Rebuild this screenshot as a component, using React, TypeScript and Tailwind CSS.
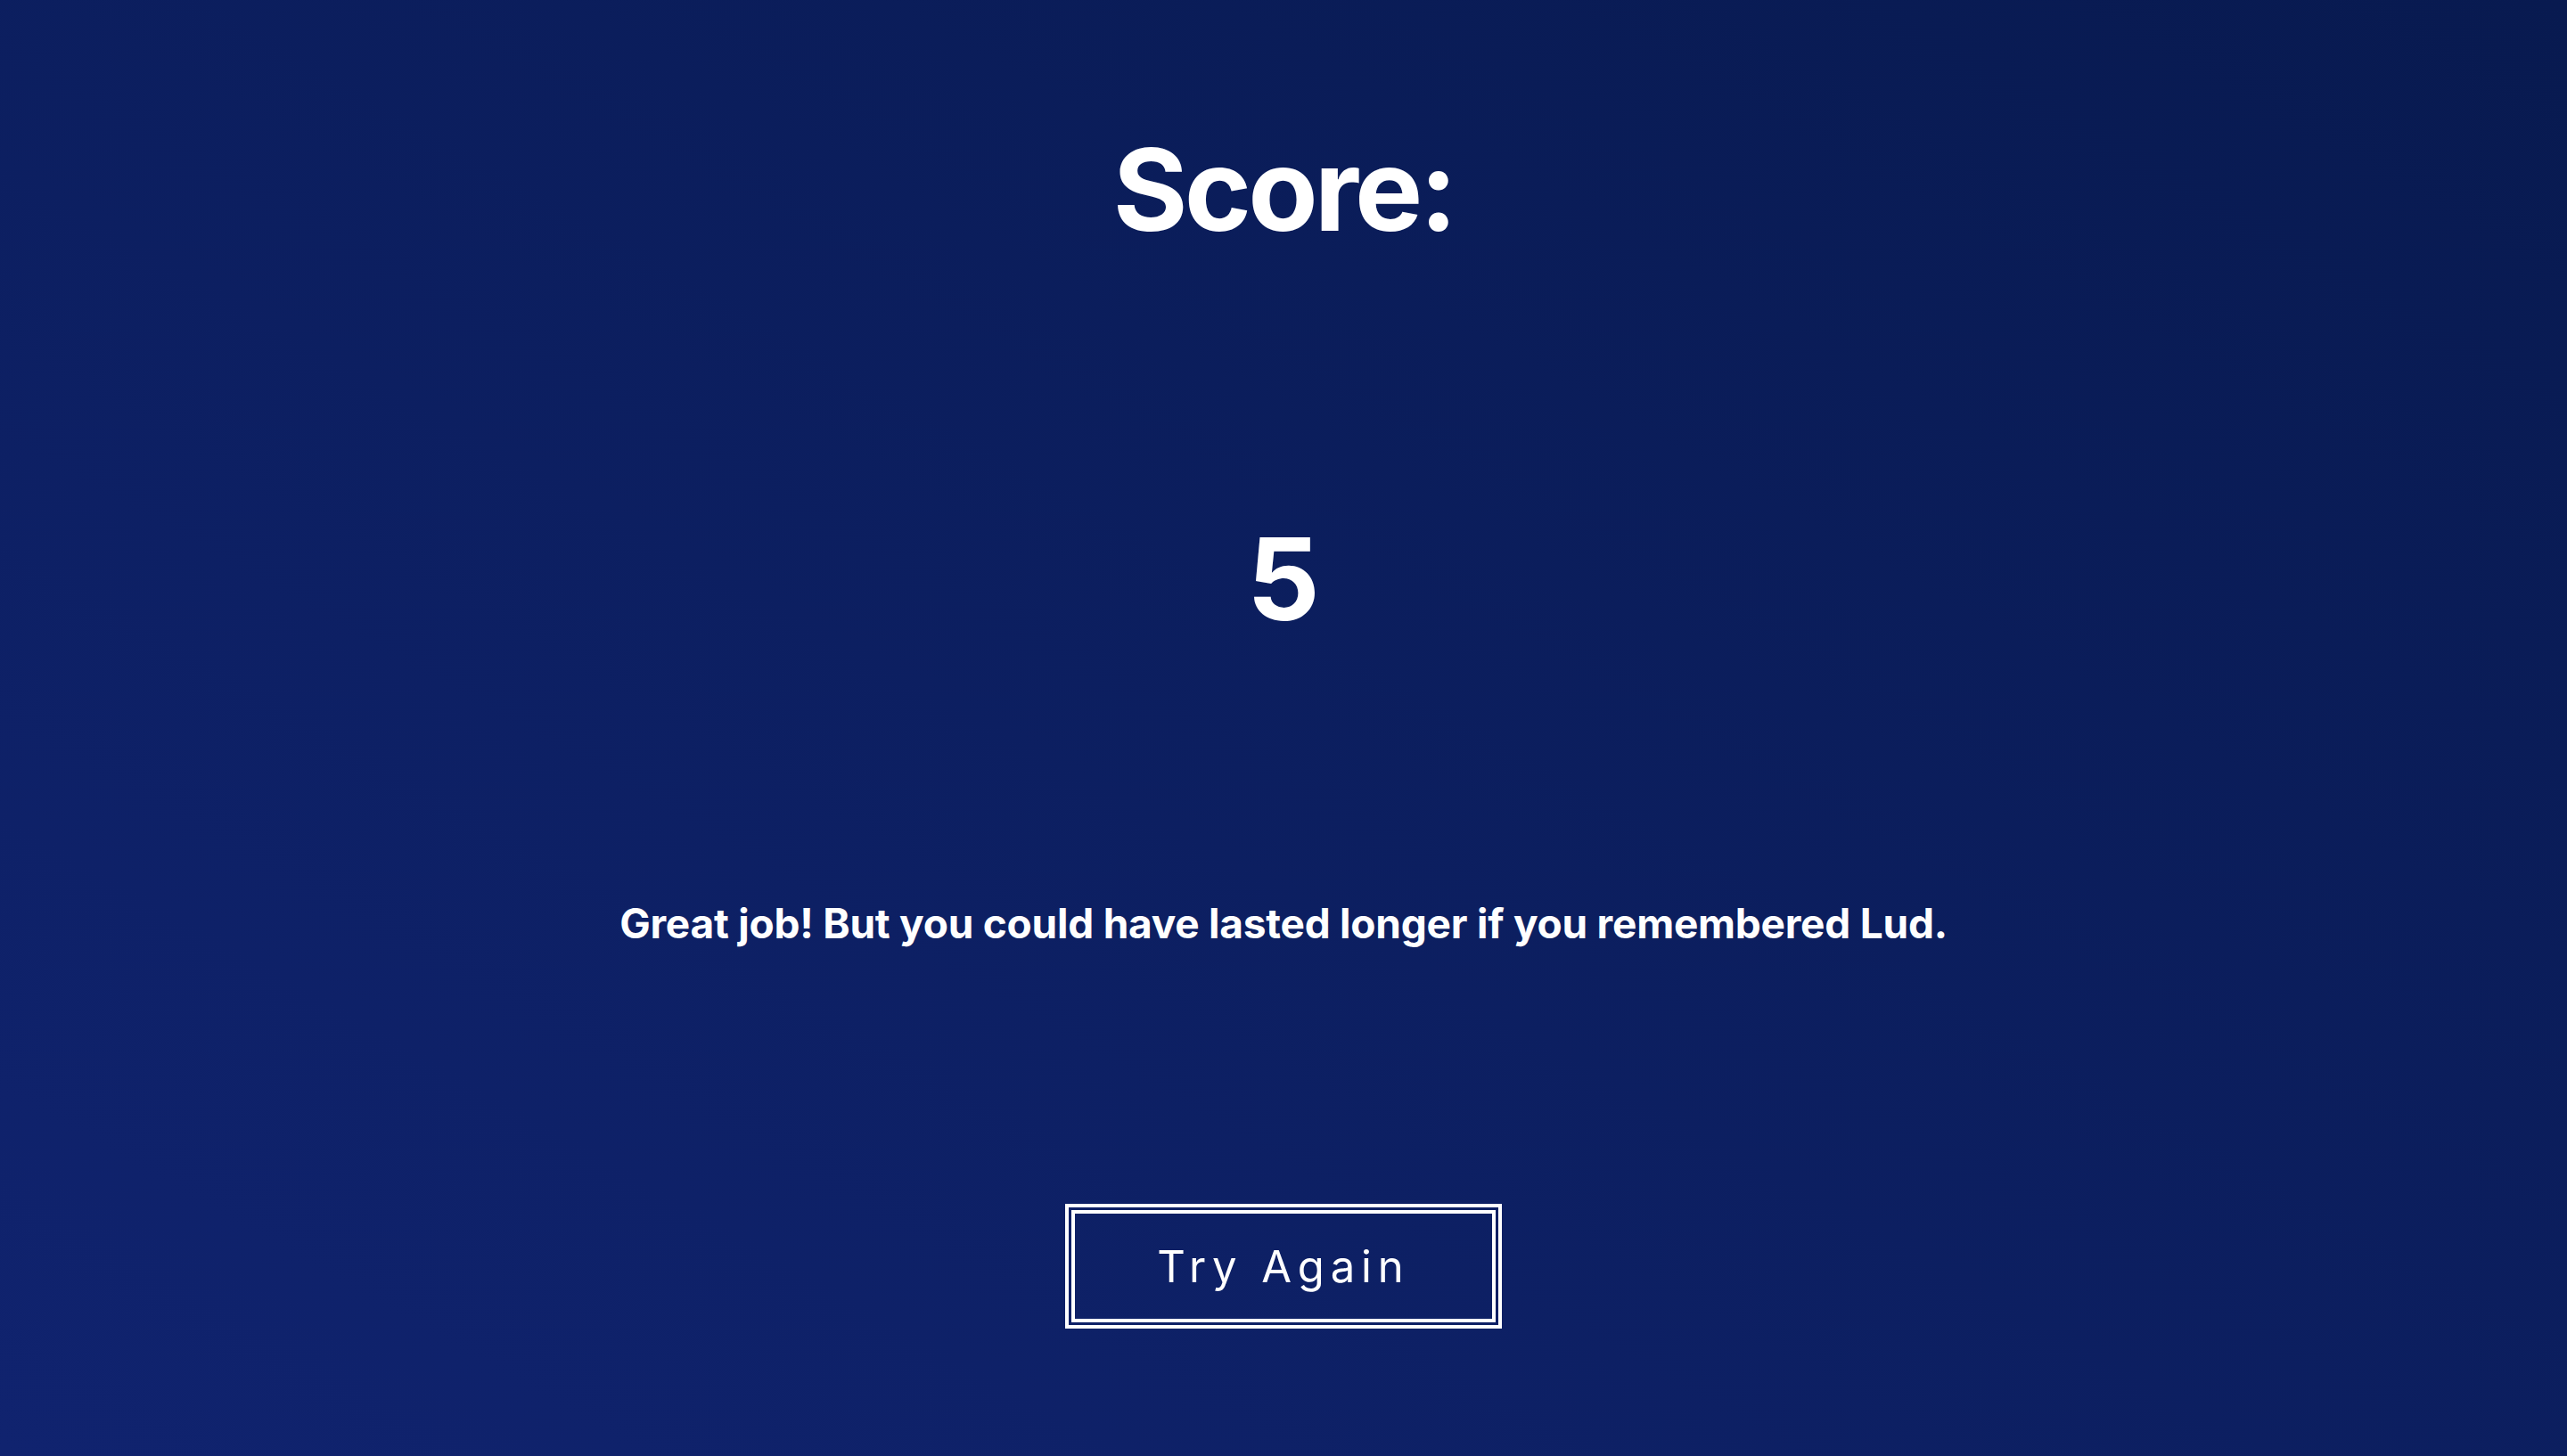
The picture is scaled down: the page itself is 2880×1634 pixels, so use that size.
export default function App() {
  return (
    <main className="flex h-[1634px] w-full flex-col items-center bg-linear-to-tr from-[#10236f] to-[#081a50] pt-[149px] font-['Inter',sans-serif] text-white">
      {/* Heading */}
      <h1 className="text-[128px] font-bold leading-none tracking-[-0.03em]">Score:</h1>

      {/* Score value */}
      <p className="mt-[309px] text-[128px] font-bold leading-none">5</p>

      {/* Message */}
      <p className="mt-[299px] text-[46px] font-bold leading-none tracking-[-0.005em]">
        Great job! But you could have lasted longer if you remembered Lud.
      </p>

      {/* Action */}
      <button
        type="button"
        className="mt-[292px] flex h-[140px] w-[490px] items-center justify-center border-[11px] border-double border-white bg-transparent text-[49px] font-normal leading-none tracking-[0.14em] text-white"
      >
        Try Again
      </button>
    </main>
  );
}
